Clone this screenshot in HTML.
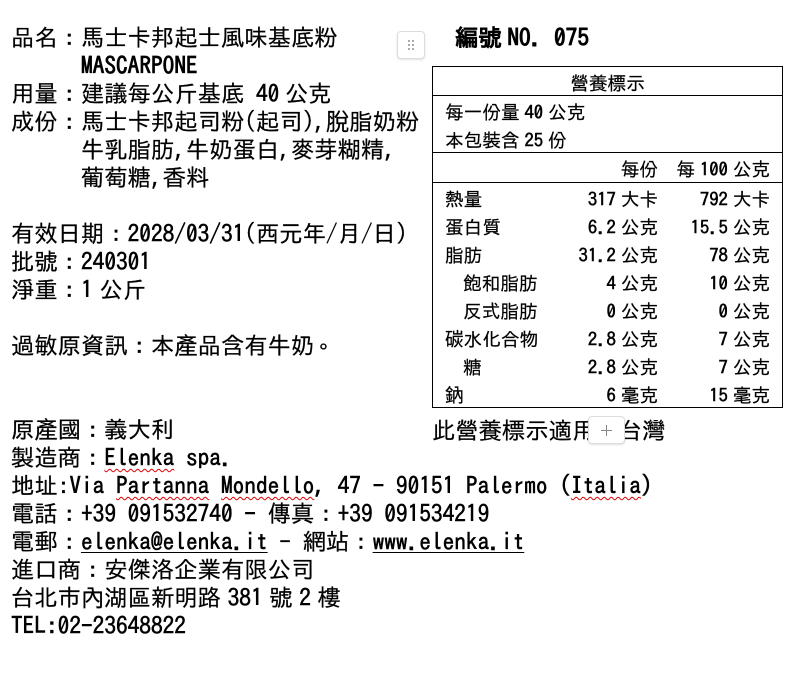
<!DOCTYPE html>
<html lang="zh-Hant"><head><meta charset="utf-8">
<style>
html,body{margin:0;padding:0;background:#fff}
body{width:789px;height:686px;position:relative;overflow:hidden;font-family:"IPAGothic","Noto Sans CJK TC",monospace;color:#000;-webkit-text-stroke:.2px #000}
.l{position:absolute;white-space:pre;font-size:23.33px;line-height:28px;height:28px;left:11px}
.t{position:absolute;white-space:pre;font-size:18.67px;line-height:28px;height:28px}
.r{text-align:right}
.h{position:absolute;left:433px;width:349px;height:1px;background:#000}
.s{word-spacing:-4.5px}
b{font-weight:normal;-webkit-text-stroke:.55px #000}
.n{word-spacing:-5px}
.w{text-decoration:underline wavy #d00;text-decoration-thickness:.6px;text-underline-offset:2px;text-decoration-skip-ink:none}
.u{text-decoration:underline;text-decoration-thickness:1px;text-underline-offset:2px;text-decoration-skip-ink:none}
.btn{position:absolute;box-sizing:border-box;background:#fff;border:1px solid #ddd;border-radius:4px;box-shadow:0 1px 2px rgba(0,0,0,.12)}
</style></head><body>
<div class="l" style="top:23px">品名：馬士卡邦起士風味基底粉</div>
<div class="l" style="top:51px;left:81px"><b style="-webkit-text-stroke:.8px #000">MASCARPONE</b></div>
<div class="l" style="top:79px">用量：建議每公斤基底 <b>40</b><span style="word-spacing:-6px"> </span>公克</div>
<div class="l" style="top:107px">成份：馬士卡邦起司粉(起司),脫脂奶粉</div>
<div class="l" style="top:135px;left:81px">牛乳脂肪,牛奶蛋白,麥芽糊精,</div>
<div class="l" style="top:163px;left:81px">葡萄糖,香料</div>
<div class="l" style="top:219px">有效日期：<b>2028/03/31</b>(西元年/月/日)</div>
<div class="l" style="top:247px">批號：<b>240301</b></div>
<div class="l n" style="top:275px">淨重：<b>1</b> 公斤</div>
<div class="l" style="top:331px">過敏原資訊：本產品含有牛奶<span style="display:inline-block;transform:translate(5px,-6px)">。</span></div>
<div class="l" style="top:415px">原產國：義大利</div>
<div class="l" style="top:443px">製造商：<b><span class="w">Elenka</span> spa.</b></div>
<div class="l" style="top:471px">地址:<b>Via <span class="w">Partanna</span> <span class="w">Mondello</span>, 47 - 90151 Palermo (<span class="w">Italia</span>)</b></div>
<div class="l" style="top:499px">電話：<b>+39 091532740 -</b> 傳真：<b>+39 091534219</b></div>
<div class="l" style="top:527px">電郵：<b class="u">elenka@elenka.it</b> - 網站：<b class="u">www.elenka.it</b></div>
<div class="l" style="top:555px">進口商：安傑洛企業有限公司</div>
<div class="l n" style="top:583px">台北市內湖區新明路 <b>381</b> 號 <b>2</b> 樓</div>
<div class="l" style="top:611px"><b>TEL:02-23648822</b></div>
<div class="l" style="top:23px;left:455px"><b style="-webkit-text-stroke:1px #000">編號<span style="margin-left:-6px"> </span>NO. 075</b></div>
<div class="l" style="top:416px;left:432px">此營養標示適用於台灣</div>

<div style="position:absolute;left:432px;top:66px;width:351px;height:342px;box-sizing:border-box;border:1px solid #000"></div>
<div class="h" style="top:95px"></div>
<div class="h" style="top:152px"></div>
<div class="h" style="top:182px"></div>
<div class="t" style="left:433px;width:349px;text-align:center;top:70px">營養標示</div>
<div class="t s" style="left:445px;top:99px">每一份量 <b>40</b> 公克</div>
<div class="t s" style="left:445px;top:127px">本包裝含 <b>25</b> 份</div>
<div class="t s r" style="right:131px;top:156px">每份</div>
<div class="t s r" style="right:19px;top:156px">每 <b>100</b> 公克</div>

<div class="t" style="left:445px;top:186px">熱量</div><div class="t s r" style="right:131px;top:186px"><b>317</b> 大卡</div><div class="t s r" style="right:19px;top:186px"><b>792</b> 大卡</div>
<div class="t" style="left:445px;top:214px">蛋白質</div><div class="t s r" style="right:131px;top:214px"><b>6.2</b> 公克</div><div class="t s r" style="right:19px;top:214px"><b>15.5</b> 公克</div>
<div class="t" style="left:445px;top:242px">脂肪</div><div class="t s r" style="right:131px;top:242px"><b>31.2</b> 公克</div><div class="t s r" style="right:19px;top:242px"><b>78</b> 公克</div>
<div class="t" style="left:463px;top:270px">飽和脂肪</div><div class="t s r" style="right:131px;top:270px"><b>4</b> 公克</div><div class="t s r" style="right:19px;top:270px"><b>10</b> 公克</div>
<div class="t" style="left:463px;top:298px">反式脂肪</div><div class="t s r" style="right:131px;top:298px"><b>0</b> 公克</div><div class="t s r" style="right:19px;top:298px"><b>0</b> 公克</div>
<div class="t" style="left:445px;top:326px">碳水化合物</div><div class="t s r" style="right:131px;top:326px"><b>2.8</b> 公克</div><div class="t s r" style="right:19px;top:326px"><b>7</b> 公克</div>
<div class="t" style="left:463px;top:354px">糖</div><div class="t s r" style="right:131px;top:354px"><b>2.8</b> 公克</div><div class="t s r" style="right:19px;top:354px"><b>7</b> 公克</div>
<div class="t" style="left:445px;top:382px">鈉</div><div class="t s r" style="right:131px;top:382px"><b>6</b> 毫克</div><div class="t s r" style="right:19px;top:382px"><b>15</b> 毫克</div>

<div class="btn" style="left:397px;top:31px;width:28px;height:28px"><svg width="26" height="26" style="position:absolute;left:0;top:0"><g fill="#aaa"><rect x="10" y="8" width="2" height="2"/><rect x="14" y="8" width="2" height="2"/><rect x="10" y="12" width="2" height="2"/><rect x="14" y="12" width="2" height="2"/><rect x="10" y="16" width="2" height="2"/><rect x="14" y="16" width="2" height="2"/></g></svg></div>
<div class="btn" style="left:588px;top:416px;width:37px;height:28px"><svg width="35" height="26" style="position:absolute;left:0;top:0"><path d="M17.5 8v11M12 13.5h11" stroke="#888" stroke-width="1" fill="none"/></svg></div>
</body></html>
